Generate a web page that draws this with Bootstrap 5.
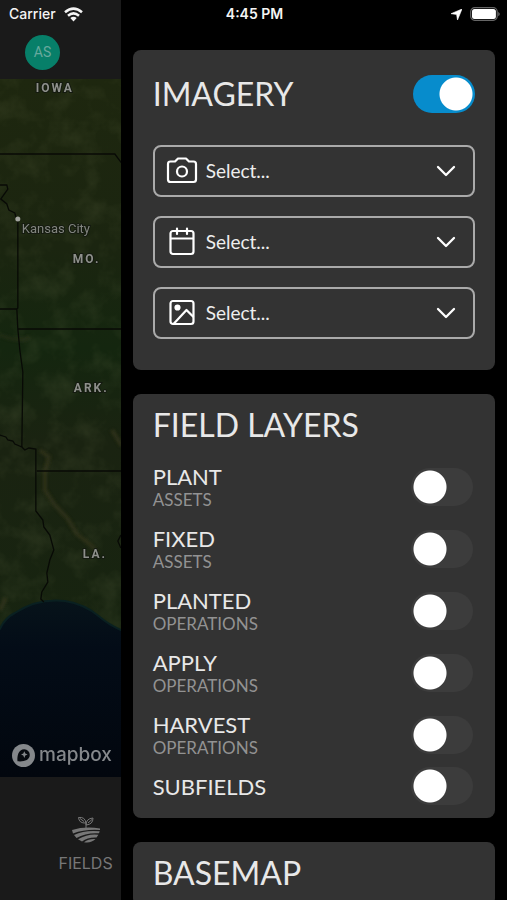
<!DOCTYPE html>
<html lang="en">
<head>
<meta charset="utf-8">
<meta name="viewport" content="width=device-width, initial-scale=1">
<title>Map layers</title>
<link href="https://cdn.jsdelivr.net/npm/bootstrap@5.3.0/dist/css/bootstrap.min.css" rel="stylesheet">
<style>
body { background: #000; font-family: Lato, sans-serif; color: #e8e8e8; }
.status { height: 28px; padding: 0 7px 0 9px; font: 500 14px/28px Inter, sans-serif; color: #f4f4f4; z-index: 5; }
.status .clock { font-weight: 600; font-size: 14px; }
.map-side { flex: 0 0 calc(24% - 1px); background: #1a1a1a; }
.map-top { height: 79px; padding: 35px 0 0 25px; }
.map-area { min-height: 0; }
.avatar { width: 35px; height: 35px; background: #077f69; color: #68a99e; font: 14px/35px Roboto, sans-serif; border: 0; padding: 0; }
.map-svg text { fill: #8e908b; paint-order: stroke; stroke: #141a10; stroke-width: 2px; }
.map-svg .state { font-family: Roboto, sans-serif; font-weight: 700; font-size: 12px; letter-spacing: 2px; }
.map-svg .city { font-family: Roboto, sans-serif; font-size: 13px; fill: #82857f; }
.map-logo { left: 12px; bottom: 10px; gap: 4px; color: #85888b; font: 500 19px/24px Inter, sans-serif; }
.tab-bar { height: 123px; padding: 38px 8px 0 0; }
.tab-link { color: #777; font: 16px/20px Inter, sans-serif; }
.drawer { padding: 50px 12px 0; gap: 24px; min-width: 0; }
.panel { background: #333; border-radius: 8px; padding: 11px 20px 13px; flex-shrink: 0; }
.panel-imagery { padding-top: 24px; padding-bottom: 31px; }
.panel h2 { font-size: 32px; line-height: 40px; font-weight: 400; margin: 0; }
.panel .picker-list { gap: 19px; margin-top: 31px; }
.picker { height: 52px; border: 2px solid #aaa; border-radius: 8px; padding-left: 11px; }
.picker .form-select { color: #eee; font-size: 19px; line-height: 28px; padding: 10px 40px 10px 8px; box-shadow: none;
  background-color: transparent; background-position: right 17px center; background-size: 20px 20px;
  background-image: url("data:image/svg+xml,%3Csvg xmlns='http://www.w3.org/2000/svg' viewBox='0 0 20 20'%3E%3Cpath d='M2 6l8 8 8-8' fill='none' stroke='%23fff' stroke-width='2.3' stroke-linecap='round' stroke-linejoin='round'/%3E%3C/svg%3E"); }
.picker svg { flex: none; }
.picker option { color: #222; }
.layer-list { margin-top: 18px; gap: 15px; padding-right: 2px; }
.layer { height: 47px; }
.layer-single { height: 38px; margin-top: 9px; padding-right: 2px; }
.layer-name { font-size: 22px; line-height: 27px; }
.layer-kind { font-size: 17px; line-height: 20px; color: #929292; }
.form-switch .toggle { width: 62px; height: 38px; margin: 0; border: 0; float: none; border-radius: 19px; background-color: #3c3c3c;
  background-image: radial-gradient(circle at center, #fff 16px, transparent 17px) !important; background-size: 38px 38px; box-shadow: none; }
.form-switch .toggle:not(:checked) { background-position: left center; }
.form-switch .toggle:checked { background-color: #078ccc; }
</style>
<script src="https://cdn.jsdelivr.net/npm/bootstrap@5.3.0/dist/js/bootstrap.bundle.min.js"></script>
</head>
<body>
<div class="position-relative vh-100 overflow-hidden d-flex">
  <header class="status position-absolute top-0 start-0 w-100 d-flex align-items-center">
    <div class="col d-flex align-items-center gap-2">Carrier
      <svg width="19" height="15" viewBox="0 0 19 15" fill="none" stroke="#f4f4f4" stroke-width="2.5"><path d="M1 5.3Q9.500-2 18 5.300M4 8.800Q9.500 4 15 8.800"/><path d="M6.300 11Q9.500 8.500 12.700 11L9.500 14.500z" fill="#f4f4f4" stroke="none"/></svg>
    </div>
    <div class="clock">4:45 PM</div>
    <div class="col d-flex justify-content-end align-items-center gap-2">
      <svg width="11" height="11" viewBox="0 0 11 11"><path d="M11 0L6.500 11 5.600 5.400 0 4.700z" fill="#fff" stroke="#fff" stroke-width=".6"/></svg>
      <svg width="30" height="14" viewBox="0 0 30 14"><rect x=".7" y=".7" width="26.500" height="12.600" rx="4" fill="none" stroke="#666" stroke-width="1.200"/><rect x="2" y="2" width="23.900" height="10" rx="2.500" fill="#fff"/><path d="M28.300 4.700q2.800 2.300 0 4.600z" fill="#777"/></svg>
    </div>
  </header>

  <section class="map-side d-flex flex-column" aria-label="Map">
    <div class="map-top"><button type="button" class="avatar rounded-circle d-block">AS</button></div>
    <div class="map-area position-relative flex-grow-1 overflow-hidden">
      <svg class="map-svg d-block w-100 h-100" viewBox="0 79 121 698" preserveAspectRatio="xMidYMid slice" role="img" aria-label="Satellite map of the central states">
        <defs>
          <linearGradient id="land" x1="0" y1="0" x2="0" y2="1"><stop offset="0" stop-color="#1e270f"/><stop offset=".3" stop-color="#1b2510"/><stop offset=".48" stop-color="#14260f"/><stop offset=".65" stop-color="#1a2311"/><stop offset="1" stop-color="#172410"/></linearGradient>
          <linearGradient id="sea" x1="0" y1="0" x2="0" y2="1"><stop offset="0" stop-color="#07131a"/><stop offset=".25" stop-color="#030c17"/><stop offset="1" stop-color="#02060d"/></linearGradient>
          <filter id="terrain" x="0" y="0" width="100%" height="100%"><feTurbulence type="fractalNoise" baseFrequency=".04" numOctaves="4" seed="8"/><feColorMatrix values="0 0 0 0 .3  0 0 0 0 .33  0 0 0 0 .15  2 0 0 0 -.85"/></filter>
          <filter id="soft"><feGaussianBlur stdDeviation="1.500"/></filter>
        </defs>
        <rect x="-10" y="79" width="150" height="560" fill="url(#land)"/>
        <rect x="-10" y="79" width="150" height="560" filter="url(#terrain)" opacity=".13"/>
        <g filter="url(#soft)" fill="none" stroke="#37371f" stroke-width="4" opacity=".7"><path d="M40 450l9 7-4 15 0 18 10 15 13 14 9 15 15 12 6 8"/><path d="M112 430l10 16M0 610l6-12" /><path d="M0 335q20 8 30 2" opacity=".5"/></g>
        <path d="M-10 640L0 629Q5 618 15 613Q38 598 65 601Q85 604 100 617Q108 624 121 630L140 632V790H-10z" fill="url(#sea)" stroke="#0a2021" stroke-width="2"/>
        <g fill="none" stroke="#080a06" stroke-width="1.300">
          <path d="M-10 154H115L121 162L130 170M-10 185H7L8 189L1 199L7 204L9 210L15 213L16 217L18 219V308L17 309H-10M17 309L18 329H130M18 329L20 350L23 372L22 447"/>
          <path d="M-10 431L0 435L6 437L8 440L13 441L15 444L22 447L25 450L29 448L36 449V511L43 520L44 527L50 535L54 550L50 560L47 573L48 582L42 592L41 599L44 602M37 471H130M121 535L118 541L121 548"/>
        </g>
        <circle cx="18" cy="219" r="2.500" fill="#a2a49f"/>
        <text class="state" x="36" y="92">IOWA</text>
        <text class="city" x="22" y="233">Kansas City</text>
        <text class="state" x="73" y="263">MO.</text>
        <text class="state" x="74" y="392">ARK.</text>
        <text class="state" x="83" y="558">LA.</text>
      </svg>
      <div class="map-logo position-absolute d-flex align-items-center">
        <svg width="23" height="23" viewBox="0 0 23 23"><circle cx="11.500" cy="11.500" r="11.500" fill="#85888b"/><path d="M5.500 17.300C5 12 6.300 5.200 12.300 5.200A5.600 5.600 0 0 1 17.800 10.800C17.800 16.500 11.500 17.900 5.500 17.300z" fill="#080b10"/><path d="M12.300 7.300l1 2.300 2.300 1-2.300 1-1 2.300-1-2.300-2.300-1 2.300-1z" fill="#85888b"/></svg>
        <span>mapbox</span>
      </div>
    </div>
    <nav class="tab-bar d-flex justify-content-end align-items-start">
      <a href="#fields" class="tab-link text-decoration-none d-flex flex-column align-items-center">
        <svg class="mb-2" width="30" height="30" viewBox="0 0 30 30">
          <g fill="none" stroke="#777" stroke-width="1"><path d="M15 14V7.500M15 8Q8 8.500 7.500 2.500Q14 1.500 15 8ZM15 10Q15 3.500 22 3Q22 9.500 15 10M9 3.500l4 3M21 4.500l-4 3.500"/></g>
          <path d="M1 15Q14 11 29 13.500L29 15Q14 14 2 18.500zM3 20Q14 14.700 28.700 16.300L28 18.300Q15 17.500 5.500 23zM7 24.300Q17 18.500 27.400 19.800L25.500 22.500Q17 22 11 26.500zM13 27.200Q18 23.500 24.500 24Q20 28.500 13 27.200z" fill="#777"/>
        </svg>
        FIELDS
      </a>
    </nav>
  </section>

  <main class="drawer flex-grow-1 d-flex flex-column">
    <section class="panel panel-imagery">
      <div class="form-switch p-0 m-0 d-flex justify-content-between align-items-center">
        <h2><label for="imagery">IMAGERY</label></h2>
        <input class="form-check-input toggle" type="checkbox" role="switch" id="imagery" checked>
      </div>
      <div class="picker-list d-flex flex-column">
        <div class="picker d-flex align-items-center">
          <svg width="32" height="32" viewBox="0 0 32 32" fill="none" stroke="#fff" stroke-width="2.200" stroke-linecap="round" stroke-linejoin="round"><path d="M4.500 6.500H9l3-3h8l3 3h4.500Q30 6.500 30 9v15.500Q30 27 27.500 27h-23Q2 27 2 24.500V9Q2 6.500 4.500 6.500z"/><circle cx="16" cy="16.500" r="5"/></svg>
          <select class="form-select border-0" aria-label="Imagery source"><option>Select...</option></select>
        </div>
        <div class="picker d-flex align-items-center">
          <svg width="32" height="32" viewBox="0 0 32 32" fill="none" stroke="#fff" stroke-width="2.200" stroke-linecap="round"><rect x="4.500" y="5" width="23" height="23" rx="2.500"/><path d="M5 12.500H27M11 2.500v5.500M21 2.500v5.500"/></svg>
          <select class="form-select border-0" aria-label="Imagery date"><option>Select...</option></select>
        </div>
        <div class="picker d-flex align-items-center">
          <svg width="32" height="32" viewBox="0 0 32 32" fill="none" stroke="#fff" stroke-width="2.200" stroke-linejoin="round"><rect x="4.500" y="4" width="23" height="23" rx="2.500"/><circle cx="11.500" cy="10.500" r="2" fill="#fff"/><path d="M7.500 27L20.500 13L27.500 20"/></svg>
          <select class="form-select border-0" aria-label="Imagery layer"><option>Select...</option></select>
        </div>
      </div>
    </section>

    <section class="panel">
      <h2>FIELD LAYERS</h2>
      <div class="layer-list d-flex flex-column">
        <div class="layer form-switch p-0 d-flex justify-content-between align-items-center"><label for="plant"><span class="layer-name d-block">PLANT</span><span class="layer-kind d-block">ASSETS</span></label><input class="form-check-input toggle" type="checkbox" role="switch" id="plant"></div>
        <div class="layer form-switch p-0 d-flex justify-content-between align-items-center"><label for="fixed"><span class="layer-name d-block">FIXED</span><span class="layer-kind d-block">ASSETS</span></label><input class="form-check-input toggle" type="checkbox" role="switch" id="fixed"></div>
        <div class="layer form-switch p-0 d-flex justify-content-between align-items-center"><label for="planted"><span class="layer-name d-block">PLANTED</span><span class="layer-kind d-block">OPERATIONS</span></label><input class="form-check-input toggle" type="checkbox" role="switch" id="planted"></div>
        <div class="layer form-switch p-0 d-flex justify-content-between align-items-center"><label for="apply"><span class="layer-name d-block">APPLY</span><span class="layer-kind d-block">OPERATIONS</span></label><input class="form-check-input toggle" type="checkbox" role="switch" id="apply"></div>
        <div class="layer form-switch p-0 d-flex justify-content-between align-items-center"><label for="harvest"><span class="layer-name d-block">HARVEST</span><span class="layer-kind d-block">OPERATIONS</span></label><input class="form-check-input toggle" type="checkbox" role="switch" id="harvest"></div>
      </div>
      <div class="layer-single form-switch ps-0 d-flex justify-content-between align-items-center"><label for="subfields" class="layer-name">SUBFIELDS</label><input class="form-check-input toggle" type="checkbox" role="switch" id="subfields"></div>
    </section>

    <section class="panel">
      <h2>BASEMAP</h2>
    </section>
  </main>
</div>
</body>
</html>
